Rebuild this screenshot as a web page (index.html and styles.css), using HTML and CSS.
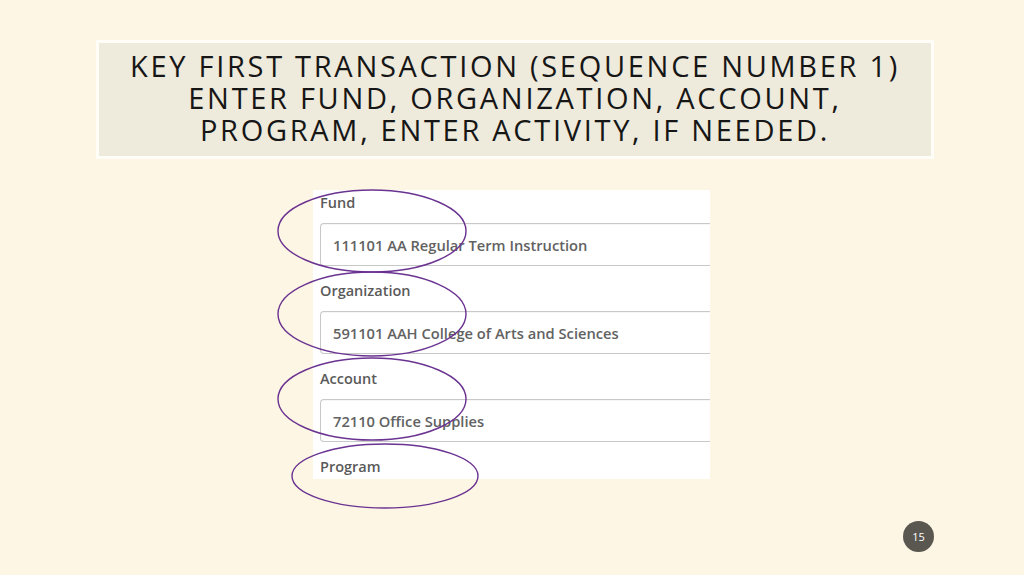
FILE: index.html
```html
<!DOCTYPE html>
<html lang="en">
<head>
    <meta charset="UTF-8">
    <title>Key First Transaction</title>
    <link rel="stylesheet" href="styles.css">
</head>
<body>
<div class="slide">
    <div class="title-box">
        <h1 class="title">KEY FIRST TRANSACTION (SEQUENCE NUMBER 1)<br>ENTER FUND, ORGANIZATION, ACCOUNT,<br>PROGRAM, ENTER ACTIVITY, IF NEEDED.</h1>
    </div>

    <div class="form-shot">
        <div class="field">
            <div class="label">Fund</div>
            <div class="input">111101 AA Regular Term Instruction</div>
        </div>
        <div class="field">
            <div class="label">Organization</div>
            <div class="input">591101 AAH College of Arts and Sciences</div>
        </div>
        <div class="field">
            <div class="label">Account</div>
            <div class="input">72110 Office Supplies</div>
        </div>
        <div class="field">
            <div class="label">Program</div>
        </div>
    </div>

    <div class="footer">
        <div class="page-num">15</div>
    </div>

    <!-- circled annotations drawn over the screenshot -->
    <svg class="marks" width="1024" height="575" viewBox="0 0 1024 575">
        <ellipse cx="372" cy="231" rx="94" ry="41" />
        <ellipse cx="372" cy="314" rx="94" ry="42" />
        <ellipse cx="372" cy="399" rx="94" ry="41" />
        <ellipse cx="385" cy="476" rx="93" ry="32" />
    </svg>
</div>
</body>
</html>
```

FILE: styles.css
```css
* {
    box-sizing: border-box;
}

body {
    margin: 0;
    padding: 0;
    background-color: #fdf6e4;
    font-family: 'Open Sans', 'Noto Sans', sans-serif;
    overflow: hidden;
}

.slide {
    position: relative;
    width: 1024px;
    height: 575px;
    display: flex;
    flex-direction: column;
    padding-top: 40px;
}

.title-box {
    margin-left: 96px;
    width: 838px;
    height: 119px;
    background-color: #eeeadc;
    border: 3px solid #fffdf8;
    padding-bottom: 3px;
    display: flex;
    justify-content: center;
    align-items: center;
}

.title {
    margin: 0;
    font-family: 'Open Sans', 'Noto Sans', sans-serif;
    font-weight: 400;
    font-size: 29px;
    line-height: 32px;
    letter-spacing: 2.7px;
    color: #161616;
    text-align: center;
    white-space: nowrap;
}

/* the pasted form screenshot */
.form-shot {
    margin-top: 31px;
    margin-left: 313px;
    width: 397px;
    height: 289px;
    background-color: #ffffff;
    padding-top: 4px;
    padding-left: 7px;
    display: flex;
    flex-direction: column;
    gap: 4px;
}

.field {
    display: flex;
    flex-direction: column;
    gap: 12px;
}

.label {
    font-size: 14.5px;
    font-weight: 600;
    color: #5a5a5a;
    line-height: 17px;
}

.input {
    height: 43px;
    border: 1px solid #c8c8c8;
    border-right: none;
    border-radius: 4px 0 0 4px;
    padding-left: 12px;
    display: flex;
    align-items: center;
    font-size: 14.7px;
    font-weight: 600;
    color: #626262;
    box-shadow: inset 0 1px 1px rgba(0, 0, 0, 0.04);
    margin-bottom: 12px;
}

.footer {
    margin-top: auto;
    padding: 0 90px 23px 0;
    display: flex;
    justify-content: flex-end;
}

.page-num {
    width: 31px;
    height: 31px;
    border-radius: 50%;
    background-color: #5a5750;
    color: #ffffff;
    font-size: 11px;
    display: flex;
    justify-content: center;
    align-items: center;
}

.marks {
    position: absolute;
    top: 0;
    left: 0;
    pointer-events: none;
}

.marks ellipse {
    fill: none;
    stroke: #6a3391;
    stroke-width: 1.4;
}
```
